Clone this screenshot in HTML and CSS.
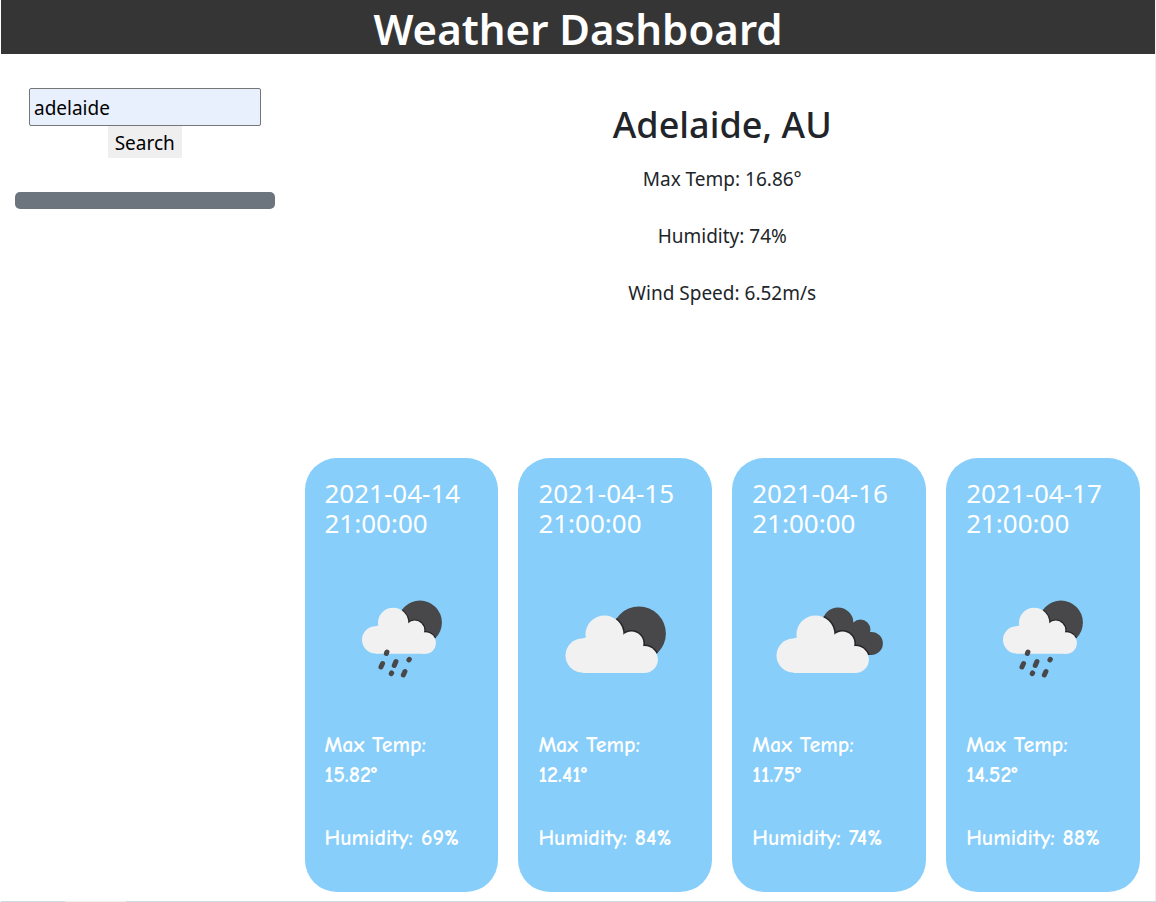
FILE: index.html
```html
<!DOCTYPE html>
<html lang="en">
<head>
<meta charset="utf-8">
<title>Weather Dashboard</title>
<meta name="viewport" content="width=device-width, initial-scale=1">
<link rel="stylesheet" href="styles.css">
</head>
<body>
<svg class="defs" aria-hidden="true">
  <defs>
    <g id="cloud">
      <circle cx="44.500" cy="93.500" r="17"/>
      <circle cx="66.500" cy="72.500" r="19"/>
      <circle cx="93.500" cy="81.500" r="12"/>
      <circle cx="106.500" cy="97.500" r="13.500"/>
      <path d="M44.500 76.500L66.500 70L93.500 78L106.500 90V111H44.500z"/>
    </g>
    <symbol id="broken" viewBox="0 0 154 154">
      <circle class="dark" cx="101" cy="71.500" r="27"/>
      <clipPath id="moon"><circle cx="101" cy="71.500" r="27"/></clipPath>
      <g clip-path="url(#moon)"><use href="#cloud" class="shade"/></g>
      <use href="#cloud" class="light"/>
    </symbol>
    <symbol id="overcast" viewBox="0 0 154 154">
      <clipPath id="back">
        <circle cx="86" cy="61" r="15.500"/>
        <circle cx="108.500" cy="67.500" r="10"/>
        <circle cx="119.500" cy="81.500" r="11.500"/>
        <path d="M86 50L100 61L108 63L119 76V93H86z"/>
      </clipPath>
      <g clip-path="url(#back)">
        <path class="dark" d="M0 0H154V154H0z"/>
        <use href="#cloud" class="shade" x="-3"/>
      </g>
      <use href="#cloud" class="light" x="-3"/>
    </symbol>
    <symbol id="rain" viewBox="0 0 154 154">
      <circle class="dark" cx="95" cy="60.500" r="22"/>
      <clipPath id="rainmoon"><circle cx="95" cy="60.500" r="22"/></clipPath>
      <g clip-path="url(#rainmoon)"><use href="#cloud" class="shade" transform="translate(15 3) scale(.8)"/></g>
      <use href="#cloud" class="light" transform="translate(15 3) scale(.8)"/>
      <path class="drops" d="M61.400 91.500L62 90M56 105L57.600 101.500M69.300 103.500L71 99.500M84 98L84.400 97.400M66.300 111.600L66.700 111M78.400 113L80 109.500"/>
    </symbol>
  </defs>
</svg>
<div class="page">
  <header class="banner"><h1>Weather Dashboard</h1></header>
  <div class="layout">
    <aside class="sidebar">
      <form class="search">
        <input class="search-box" type="text" name="city" value="adelaide" aria-label="City">
        <button class="search-button" type="button">Search</button>
      </form>
      <div class="history"></div>
    </aside>
    <main class="content">
      <section class="current">
        <h2>Adelaide, AU</h2>
        <p>Max Temp: 16.86°</p>
        <p>Humidity: 74%</p>
        <p>Wind Speed: 6.52m/s</p>
      </section>
      <section class="forecast" aria-label="Forecast">
        <article class="card">
          <h3>2021-04-14 21:00:00</h3>
          <svg class="icon" role="img" aria-label="Rain"><use href="#rain"/></svg>
          <p>Max Temp: 15.82°</p>
          <p>Humidity: 69%</p>
        </article>
        <article class="card">
          <h3>2021-04-15 21:00:00</h3>
          <svg class="icon" role="img" aria-label="Partly cloudy"><use href="#broken"/></svg>
          <p>Max Temp: 12.41°</p>
          <p>Humidity: 84%</p>
        </article>
        <article class="card">
          <h3>2021-04-16 21:00:00</h3>
          <svg class="icon" role="img" aria-label="Cloudy"><use href="#overcast"/></svg>
          <p>Max Temp: 11.75°</p>
          <p>Humidity: 74%</p>
        </article>
        <article class="card">
          <h3>2021-04-17 21:00:00</h3>
          <svg class="icon" role="img" aria-label="Rain"><use href="#rain"/></svg>
          <p>Max Temp: 14.52°</p>
          <p>Humidity: 88%</p>
        </article>
      </section>
    </main>
  </div>
</div>
<footer class="edge"><div class="edge-gap"></div></footer>
</body>
</html>
```
FILE: styles.css
```css
* { box-sizing: border-box; }
body {
  margin: 0;
  background: #fff;
  color: #212529;
  font-family: "Segoe UI", "Noto Sans", sans-serif;
  font-size: 19px;
  line-height: 29px;
}
h1, h2, h3, p { margin: 0; }
.defs { position: absolute; width: 0; height: 0; }
.page { margin-left: 1px; border-right: 1px solid #eee; }
.banner { padding-top: 4px; background: #353535; color: #fff; text-align: center; }
.banner h1 { font-size: 42px; line-height: 50px; font-weight: 600; }
.layout { display: grid; grid-template-columns: 1fr 3fr; }
.sidebar { padding: 34px 15px 0 14px; }
.search {
  display: flex;
  flex-direction: column;
  align-items: center;
  padding: 0 14px;
  margin-bottom: 34px;
}
.search-box {
  width: 100%;
  height: 38px;
  padding: 4px 4px 2px;
  border: 1px solid #767676;
  border-radius: 2px;
  background: #e8f0fe;
  color: #000;
  font: inherit;
}
.search-button {
  height: 32px;
  padding: 2px 7px 0;
  border: 0;
  background: #efefef;
  color: #000;
  font: inherit;
}
.history { height: 17px; border-radius: 5px; background: #6c757d; }
.content { padding: 48px 15px 9px; }
.current { text-align: center; padding-bottom: 122px; }
.current h2 { font-size: 36px; line-height: 46px; font-weight: 500; margin-bottom: 17px; }
.current p { margin-bottom: 28px; }
.forecast { display: grid; grid-template-columns: repeat(4, 1fr); gap: 20px; }
.card {
  padding: 20px 20px 6px;
  border-radius: 32px;
  background: #87cefa;
  color: #fff;
  font-family: "Comic Sans MS", "Comic Neue", "Noto Sans", sans-serif;
}
.card h3 { font-family: "Noto Sans", sans-serif; font-size: 26px; line-height: 30px; font-weight: 400; margin-bottom: 24px; }
.card p { font-size: 22px; line-height: 30px; font-weight: 700; margin-bottom: 33px; }
.icon { display: block; width: 100%; height: 154px; margin-bottom: 14px; }
.dark { fill: #48484a; }
.light { fill: #f1f1f1; }
.shade { fill: #252527; stroke: #252527; stroke-width: 3px; }
.drops { fill: none; stroke: #48484a; stroke-width: 5px; stroke-linecap: round; }
.edge { margin-left: 1px; padding-left: 64px; height: 1px; background: #d0dae4; }
.edge-gap { width: 61px; height: 1px; background: #eee; }
```
